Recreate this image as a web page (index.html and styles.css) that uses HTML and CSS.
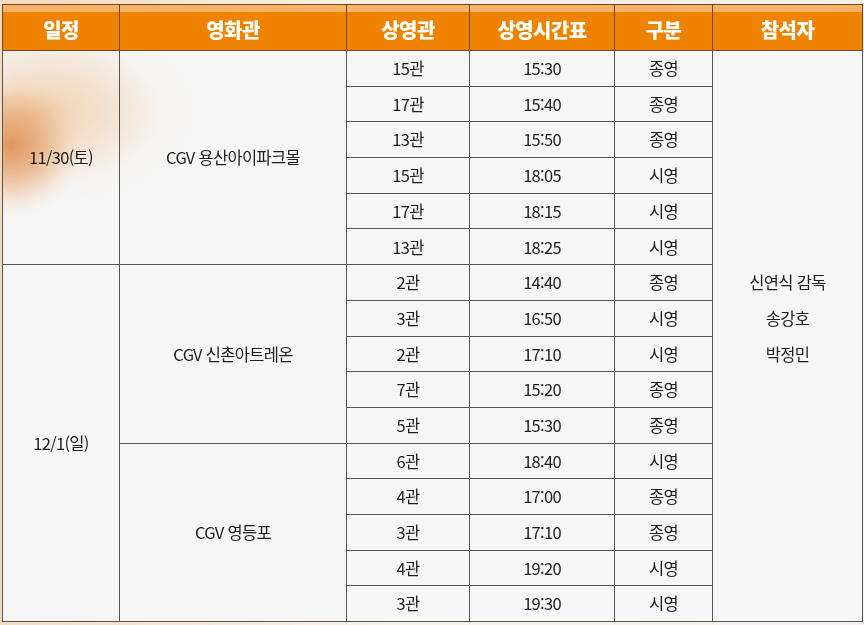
FILE: index.html
```html
<!DOCTYPE html>
<html lang="ko">
<head>
<meta charset="utf-8">
<link rel="stylesheet" href="styles.css">
</head>
<body>
<div class="wrap">
<table class="sched">
<colgroup>
<col class="c1"><col class="c2"><col class="c3"><col class="c4"><col class="c5"><col class="c6">
</colgroup>
<thead>
<tr><th>일정</th><th>영화관</th><th>상영관</th><th>상영시간표</th><th>구분</th><th>참석자</th></tr>
</thead>
<tbody>
<tr><td rowspan="6" class="date">11/30(토)</td><td rowspan="6">CGV 용산아이파크몰</td><td>15관</td><td>15:30</td><td>종영</td><td rowspan="16" class="guests">신연식 감독<br>송강호<br>박정민<br>&nbsp;</td></tr>
<tr><td>17관</td><td>15:40</td><td>종영</td></tr>
<tr><td>13관</td><td>15:50</td><td>종영</td></tr>
<tr><td>15관</td><td>18:05</td><td>시영</td></tr>
<tr><td>17관</td><td>18:15</td><td>시영</td></tr>
<tr><td>13관</td><td>18:25</td><td>시영</td></tr>
<tr><td rowspan="10" class="date">12/1(일)</td><td rowspan="5">CGV 신촌아트레온</td><td>2관</td><td>14:40</td><td>종영</td></tr>
<tr><td>3관</td><td>16:50</td><td>시영</td></tr>
<tr><td>2관</td><td>17:10</td><td>시영</td></tr>
<tr><td>7관</td><td>15:20</td><td>종영</td></tr>
<tr><td>5관</td><td>15:30</td><td>종영</td></tr>
<tr><td rowspan="5">CGV 영등포</td><td>6관</td><td>18:40</td><td>시영</td></tr>
<tr><td>4관</td><td>17:00</td><td>종영</td></tr>
<tr><td>3관</td><td>17:10</td><td>종영</td></tr>
<tr><td>4관</td><td>19:20</td><td>시영</td></tr>
<tr><td>3관</td><td>19:30</td><td>시영</td></tr>
</tbody>
</table>
<div class="glow"></div>
</div>
</body>
</html>
```
FILE: styles.css
```css
html, body {
  margin: 0;
  padding: 0;
}
body {
  width: 864px;
  height: 625px;
  overflow: hidden;
  background: linear-gradient(90deg, #f4dcc0 0%, #f8efe4 40%, #f7f1ea 100%);
  font-family: "Noto Sans CJK KR", sans-serif;
  color: #1e1e1e;
}
.wrap {
  position: relative;
  padding: 4px 0 0 2px;
}
.sched {
  border-collapse: collapse;
  table-layout: fixed;
  width: 860px;
  background: #f6f6f6;
}
.c1 { width: 117px; }
.c2 { width: 227px; }
.c3 { width: 123px; }
.c4 { width: 145px; }
.c5 { width: 98px; }
.c6 { width: 150px; }
.sched th {
  height: 41px;
  padding: 4px 0 0;
  background: #ef8300;
  box-shadow: inset 0 7px 0 #f7b468;
  color: #fff;
  font-weight: 900;
  font-size: 20px;
  letter-spacing: -0.6px;
  border: 1px solid #7a4516;
  border-bottom-color: #6b4a2c;
  text-align: center;
  vertical-align: middle;
  line-height: 1;
}
.sched td {
  height: 34.7px;
  padding: 0;
  border: 1px solid #555;
  text-align: center;
  vertical-align: middle;
  font-size: 16.5px;
  letter-spacing: -0.7px;
  line-height: 1;
}
.sched td.guests {
  line-height: 36px;
}
.glow {
  position: absolute;
  left: 3px;
  top: 51px;
  width: 200px;
  height: 210px;
  pointer-events: none;
  background:
    radial-gradient(ellipse 70px 70px at 8px 95px, rgba(226,122,48,0.7) 0%, rgba(236,148,80,0.5) 45%, rgba(246,190,135,0.2) 80%, rgba(250,225,195,0) 100%),
    radial-gradient(ellipse 150px 95px at 45px 60px, rgba(244,172,105,0.45) 0%, rgba(247,196,142,0.3) 45%, rgba(250,220,190,0.1) 75%, rgba(250,230,200,0) 100%);
  mix-blend-mode: multiply;
}
```
